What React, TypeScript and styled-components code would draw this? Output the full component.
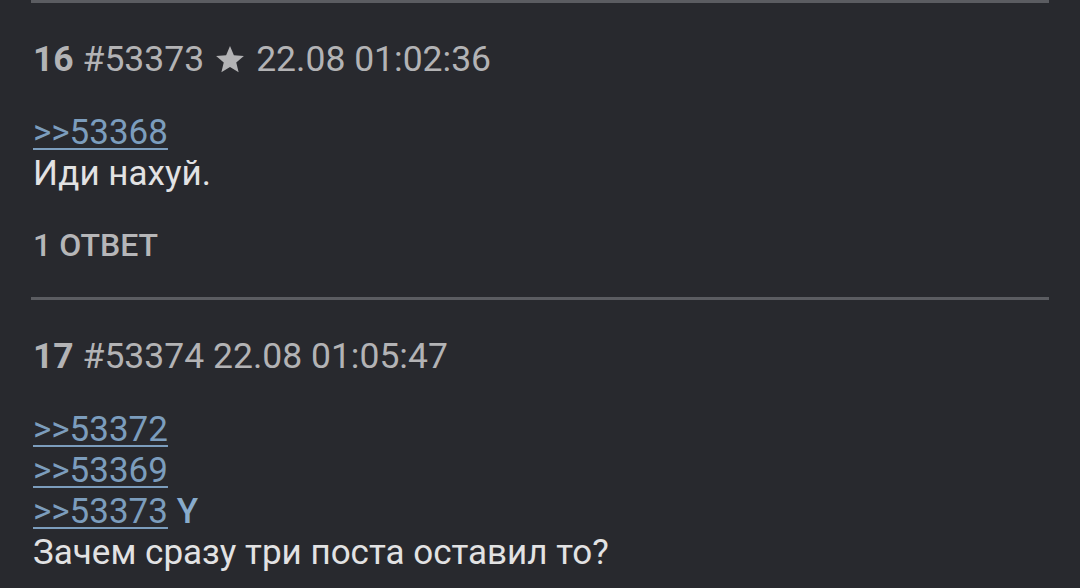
import React from "react";
import styled, { createGlobalStyle } from "styled-components";

const GlobalStyle = createGlobalStyle`
  html, body {
    margin: 0;
    padding: 0;
    background-color: #28292e;
  }
  body {
    font-family: Roboto, "Noto Sans", sans-serif;
  }
`;

const ThreadWrapper = styled.div`
  width: 1080px;
  height: 588px;
  overflow: hidden;
  background-color: #28292e;
  padding: 0 31px;
  box-sizing: border-box;
`;

const Divider = styled.div`
  height: 3px;
  background-color: #5b5c61;
`;

const Post = styled.div`
  padding: 36px 2px 31px;
`;

const PostHeader = styled.div`
  display: flex;
  align-items: center;
  gap: 11px;
  font-size: 35.5px;
  line-height: 41px;
  color: #b3b3b5;
  margin-bottom: 32px;
`;

const PostIndex = styled.span`
  font-weight: 700;
`;

const Star = styled.svg`
  width: 30px;
  height: 30px;
  fill: #b3b3b5;
  margin-top: -2px;
`;

const PostBody = styled.div`
  font-size: 35px;
  line-height: 41px;
  color: #e2e2e3;
`;

const ReplyLink = styled.a`
  color: #7c9dbd;
  text-decoration: underline;
  text-decoration-thickness: 2px;
  text-underline-offset: 4px;
`;

const YouMark = styled.span`
  color: #88abcc;
  font-weight: 500;
`;

const Answers = styled.div`
  margin-top: 31px;
  font-size: 32px;
  line-height: 41px;
  font-weight: 500;
  color: #b6b6b8;
`;

const StarIcon = () => (
  <Star viewBox="0 0 24 24">
    <path d="M12 1.5l3.1 7.4 8 .6-6.1 5.2 1.9 7.8L12 18.3l-6.9 4.2 1.9-7.8L.9 9.5l8-.6z" />
  </Star>
);

const App: React.FC = () => {
  return (
    <ThreadWrapper>
      <GlobalStyle />
      <Divider />
      <Post>
        <PostHeader>
          <span>
            <PostIndex>16</PostIndex> #53373
          </span>
          <StarIcon />
          <span>22.08 01:02:36</span>
        </PostHeader>
        <PostBody>
          <ReplyLink>&gt;&gt;53368</ReplyLink>
          <br />
          Иди нахуй.
        </PostBody>
        <Answers>1 ОТВЕТ</Answers>
      </Post>
      <Divider />
      <Post>
        <PostHeader>
          <span>
            <PostIndex>17</PostIndex> #53374 22.08 01:05:47
          </span>
        </PostHeader>
        <PostBody>
          <ReplyLink>&gt;&gt;53372</ReplyLink>
          <br />
          <ReplyLink>&gt;&gt;53369</ReplyLink>
          <br />
          <ReplyLink>&gt;&gt;53373</ReplyLink>
          <YouMark> Y</YouMark>
          <br />
          Зачем сразу три поста оставил то?
        </PostBody>
      </Post>
    </ThreadWrapper>
  );
};

export default App;
